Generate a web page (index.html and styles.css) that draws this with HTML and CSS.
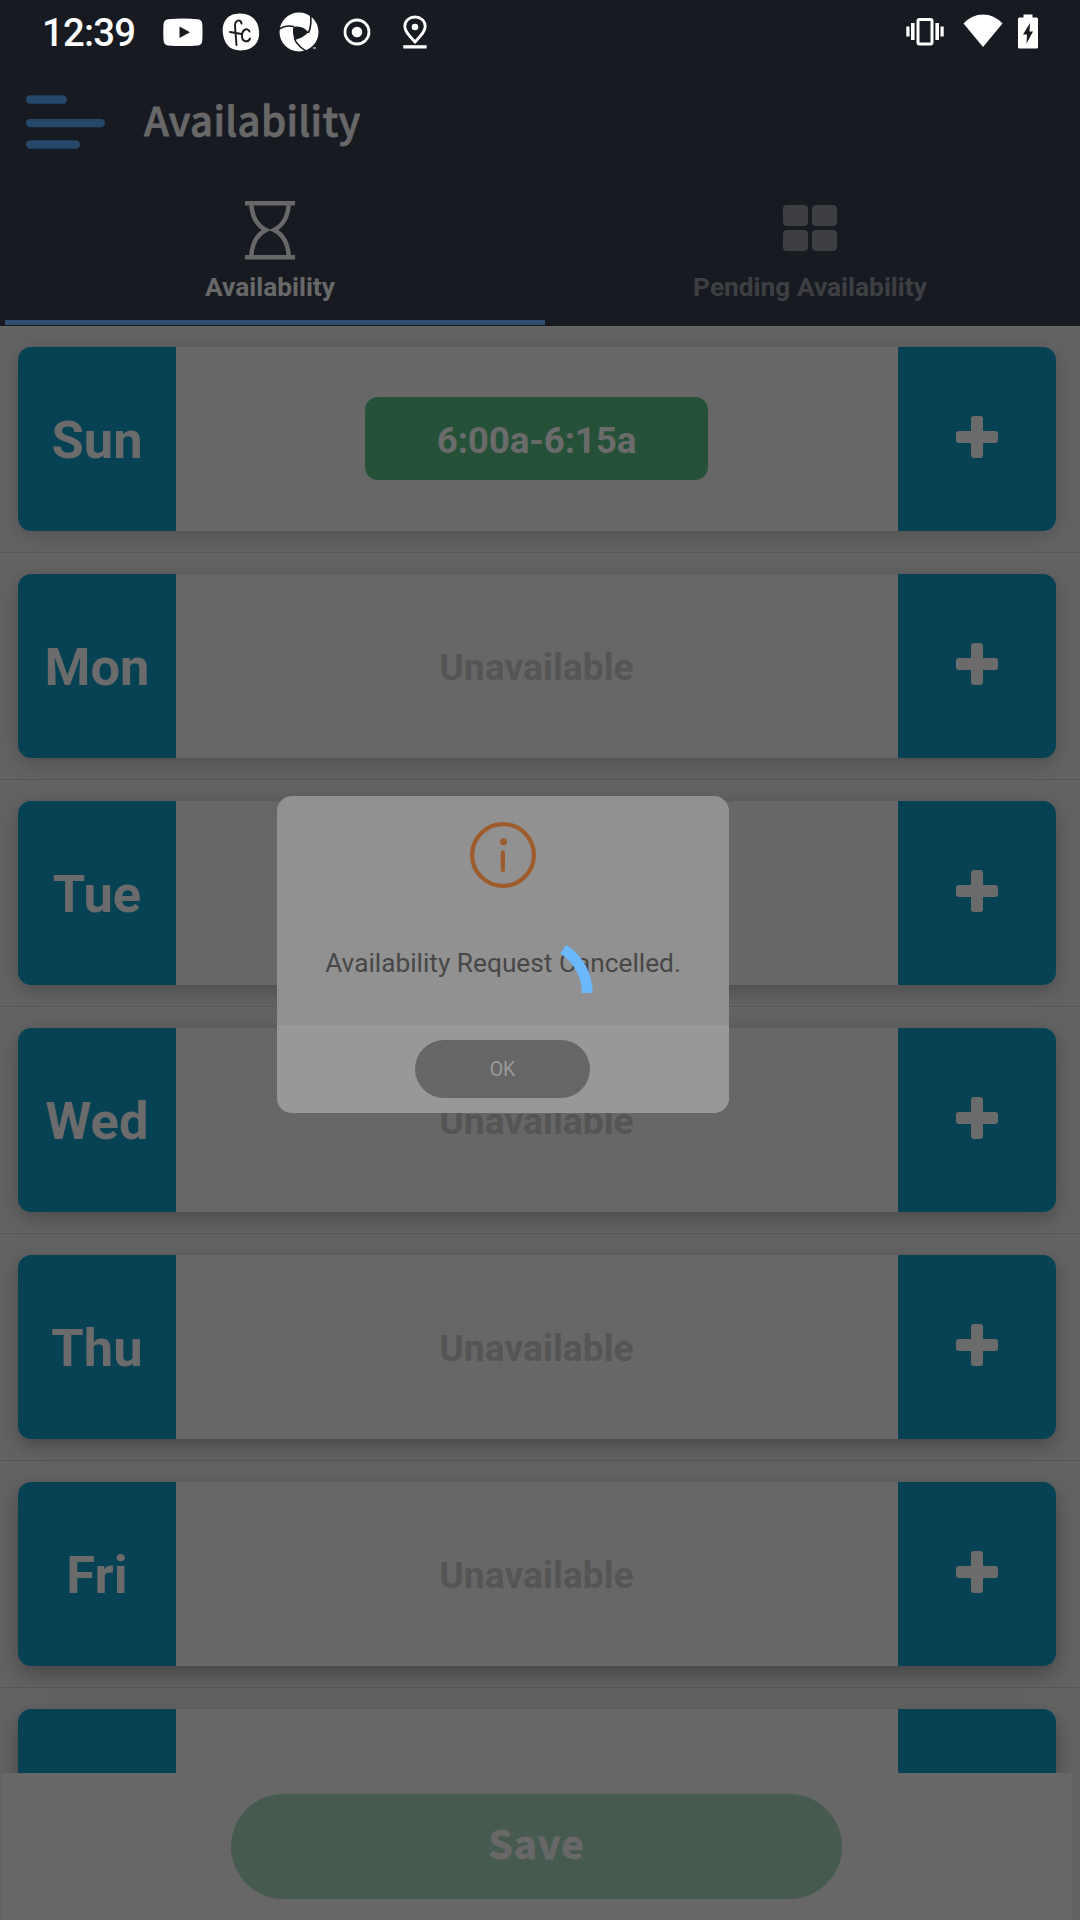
FILE: index.html
```html
<!DOCTYPE html>
<html lang="en">
<head>
<meta charset="utf-8">
<title>Availability</title>
<link rel="stylesheet" href="styles.css">
</head>
<body>
<div class="screen">
  <header class="header">
    <div class="status">
      <span class="clock">12:39</span>
      <div class="status-left">
        <svg class="sicon" viewBox="0 0 48 48"><path fill="#fff" fill-rule="evenodd" d="M9 11.200Q24 9.600 39 11.200Q43 11.800 43.300 16Q43.800 24 43.300 32.500Q43 37 39 37.400Q24 38.600 9 37.400Q5 37 4.500 32.500Q4 24 4.500 16Q5 11.800 9 11.200ZM20.500 18.500V30L31 24.200Z"/></svg>
        <svg class="sicon" viewBox="0 0 48 48"><path fill="#fff" d="M21 5.700C30 5 37 9 40 15C42.500 21 43 28 40.500 33C37.500 39.500 31 42.500 24 42.500C16 42.500 10 39 7.500 32C5 25 5 18 8 13C11 8 15 6 21 5.700Z"/><g fill="none" stroke="#181a22" stroke-width="1.900" stroke-linecap="round"><path d="M24.500 15.500C24 11 18 11.500 18 18L19.500 37M13 24L24.500 26"/><path d="M32.500 23.500C31 19.500 25.500 21 25 27C24.500 34 31 35 33 30.500"/></g></svg>
        <svg class="sicon" viewBox="0 0 48 48"><circle cx="24" cy="24" r="19.500" fill="#fff"/><path fill="#181a22" d="M18.300 19C25 17.500 30 20 33.500 24.300C29 29 24 31 19.600 32C18 27 17.500 23 18.300 19Z"/><g fill="none" stroke="#181a22" stroke-width="1.600"><path d="M3 22Q10 16.500 19 18.500M33.500 25Q37 17 35.500 6M19.500 31Q23 39 33 44"/></g><path stroke="#fff" d="M38 40h3"/></svg>
        <svg class="sicon" viewBox="0 0 48 48"><circle cx="24" cy="24" r="12" fill="none" stroke="#fff" stroke-width="2.800"/><circle cx="24" cy="24" r="5.300" fill="#fff"/></svg>
        <svg class="sicon" viewBox="0 0 48 48"><path fill="none" stroke="#fff" stroke-width="2.800" d="M24 34C18 27.500 13.800 23.500 13.800 18.500C13.800 12.700 18.500 9 24 9S34.200 12.700 34.200 18.500C34.200 23.500 30 27.500 24 34Z"/><circle cx="24" cy="19" r="3.300" fill="#fff"/><path fill="#fff" d="M12.300 37.200h23.400v3.300H12.300z"/></svg>
      </div>
      <div class="status-right">
        <svg class="vibrate" viewBox="0 0 40 48"><rect x="13" y="11.500" width="14" height="24.500" rx="1.500" fill="none" stroke="#fff" stroke-width="3"/><path fill="#fff" d="M1.300 18.500h3.200v10H1.300zM6 15h3.600v17H6zM30.400 15h3.600v17h-3.600zM35.500 18.500h3.200v10h-3.200z"/></svg>
        <svg class="wifi" viewBox="0 0 40 48"><path fill="#fff" d="M.5 15.500Q9 6.500 20 6.500T39.500 15.500L20 39Z"/></svg>
        <svg class="battery" viewBox="0 0 20 48"><path fill="#fff" d="M5.500 6.500h9v3H18.500q1.500 0 1.500 1.500V39q0 1.500-1.500 1.500H1.500Q0 40.500 0 39V11q0-1.500 1.500-1.500h4z"/><path fill="#181a22" d="M12 15L5 26.500h4L8.500 35.500L15 23.500h-3.500Z"/></svg>
      </div>
    </div>
    <div class="titlebar">
      <svg class="menu" viewBox="0 0 80 54"><g fill="#254769"><rect y="0.300" width="41" height="8.400" rx="4.200"/><rect y="24" width="79" height="8.200" rx="4.100"/><rect y="45.300" width="54" height="8.400" rx="4.200"/></g></svg>
      <h1 class="title">Availability</h1>
    </div>
    <nav class="tabs">
      <div class="tab tab-active">
        <svg class="tab-icon" viewBox="0 0 60 60"><g fill="none" stroke="#686868" stroke-width="4.500"><path d="M5 3.300H55M5 57.200H55"/><path d="M11.300 4C12 17 18 26 26 30C18 34 12 43 11.300 56M48.700 4C48 17 42 26 34 30C42 34 48 43 48.700 56"/></g></svg>
        <span class="tab-label">Availability</span>
      </div>
      <div class="tab">
        <svg class="tab-icon" viewBox="0 0 60 60"><g fill="#3e3f43"><rect x="3" y="5" width="25" height="21" rx="4"/><rect x="32" y="5" width="25" height="21" rx="4"/><rect x="3" y="30" width="25" height="21" rx="4"/><rect x="32" y="30" width="25" height="21" rx="4"/></g></svg>
        <span class="tab-label">Pending Availability</span>
      </div>
    </nav>
    <div class="indicator"></div>
  </header>

  <main class="days">
    <section class="row"><div class="card e1"><div class="day">Sun</div><div class="slot"><span class="chip">6:00a-6:15a</span></div><div class="add"><i class="plus"></i></div></div></section>
    <section class="row"><div class="card e2"><div class="day">Mon</div><div class="slot">Unavailable</div><div class="add"><i class="plus"></i></div></div></section>
    <section class="row"><div class="card e3"><div class="day">Tue</div><div class="slot">Unavailable</div><div class="add"><i class="plus"></i></div></div></section>
    <section class="row"><div class="card e4"><div class="day">Wed</div><div class="slot">Unavailable</div><div class="add"><i class="plus"></i></div></div></section>
    <section class="row"><div class="card e5"><div class="day">Thu</div><div class="slot">Unavailable</div><div class="add"><i class="plus"></i></div></div></section>
    <section class="row"><div class="card e6"><div class="day">Fri</div><div class="slot">Unavailable</div><div class="add"><i class="plus"></i></div></div></section>
    <section class="row"><div class="card e7"><div class="day"></div><div class="slot"></div><div class="add"></div></div></section>
  </main>

  <footer class="savebar"><button class="save">Save</button></footer>

  <div class="dialog">
    <div class="dialog-body">
      <svg class="info" viewBox="0 0 66 66"><circle cx="33" cy="33" r="30.900" fill="none" stroke="#9e5c2d" stroke-width="4.200"/><circle cx="33.500" cy="19.700" r="3.500" fill="#9e5c2d"/><rect x="30.700" y="28.500" width="4.300" height="21.500" rx="2.100" fill="#9e5c2d"/></svg>
      <p class="message">Availability Request Cancelled.</p>
    </div>
    <div class="dialog-foot"><button class="ok">OK</button></div>
  </div>
  <svg class="spinner" viewBox="0 0 120 120"><path fill="none" stroke="#6bb8fd" stroke-width="10.800" d="M87.300 16.300A51.800 51.800 0 0 1 111.300 60"/></svg>
</div>
</body>
</html>
```
FILE: styles.css
```css
* { box-sizing: border-box; }
body { margin: 0; font-family: Roboto, sans-serif; }
.screen {
  position: relative;
  display: flex;
  flex-direction: column;
  width: 1080px;
  height: 1920px;
  overflow: hidden;
  background: #636363;
}

/* Header */
.header {
  display: flex;
  flex-direction: column;
  flex: none;
  height: 326px;
  background: #181a22;
}
.status {
  display: flex;
  align-items: center;
  height: 63px;
  padding: 0 42px;
}
.clock {
  width: 117px;
  padding-top: 3px;
  color: #fff;
  font-size: 38.300px;
  font-weight: 500;
  letter-spacing: -0.8px;
  line-height: 48px;
}
.status-left { display: flex; gap: 10px; }
.sicon { width: 48px; height: 48px; }
.status-right { display: flex; margin-left: auto; }
.vibrate, .wifi { width: 40px; height: 48px; }
.wifi { margin: 0 15px 0 18px; }
.battery { width: 20px; height: 48px; }
.titlebar {
  display: flex;
  align-items: flex-start;
  height: 135px;
  padding: 32px 0 0 26px;
}
.menu { width: 80px; height: 54px; }
.title {
  margin: 0 0 0 38px;
  color: #686868;
  font-family: "Noto Sans CJK JP", sans-serif;
  font-size: 40px;
  font-weight: 500;
  letter-spacing: 0.35px;
  line-height: 48px;
  -webkit-text-stroke: 0.8px #686868;
}
.tabs { display: flex; height: 122px; }
.tab {
  display: flex;
  flex-direction: column;
  align-items: center;
  flex: 1;
  padding-top: 2px;
  color: #3e3f43;
}
.tab-active { color: #686868; }
.tab-icon { width: 60px; height: 60px; }
.tab-label {
  margin-top: 11px;
  font-size: 26.300px;
  font-weight: 700;
  line-height: 32px;
}
.indicator {
  width: 540px;
  height: 5px;
  margin-left: 5px;
  background: #2c4d6b;
}

/* Day list */
.days { flex: 1; overflow: hidden; }
.row {
  height: 227px;
  padding: 21px 24px 0 18px;
  border-bottom: 1px solid #585858;
}
.card {
  display: flex;
  height: 184px;
  border-radius: 13px;
  background: #676767;
}
.e1 { box-shadow: 0 4px 20px rgba(0, 0, 0, .19); }
.e2 { box-shadow: 0 5px 20px rgba(0, 0, 0, .22); }
.e3 { box-shadow: 0 5px 20px rgba(0, 0, 0, .24); }
.e4 { box-shadow: 0 6px 20px rgba(0, 0, 0, .26); }
.e5 { box-shadow: 0 7px 20px rgba(0, 0, 0, .28); }
.e6 { box-shadow: 0 8px 21px rgba(0, 0, 0, .30); }
.e7 { box-shadow: 0 9px 21px rgba(0, 0, 0, .32); }
.day, .add {
  display: flex;
  align-items: center;
  justify-content: center;
  width: 158px;
  background: #064154;
}
.day {
  padding: 2px 0 0;
  border-radius: 13px 0 0 13px;
  color: #6b6b6b;
  font-size: 52.500px;
  font-weight: 700;
}
.add {
  padding-bottom: 4px;
  border-radius: 0 13px 13px 0;
}
.plus {
  display: grid;
  place-items: center;
  width: 42px;
  height: 42px;
}
.plus::before, .plus::after {
  grid-area: 1 / 1;
  border-radius: 3px;
  background: #6b6b6b;
  content: "";
}
.plus::before { width: 12px; height: 42px; }
.plus::after { width: 42px; height: 12px; }
.slot {
  display: flex;
  align-items: center;
  justify-content: center;
  flex: 1;
  padding: 1px 1px 0 0;
  color: #555;
  font-size: 37.300px;
  font-weight: 700;
}
.chip {
  display: flex;
  align-items: center;
  justify-content: center;
  width: 343px;
  height: 83px;
  margin-top: -3px;
  padding-top: 4px;
  border-radius: 13px;
  background: #265139;
  color: #6b6b6b;
  font-size: 36.800px;
  letter-spacing: -0.15px;
}

/* Save bar */
.savebar {
  display: flex;
  justify-content: center;
  flex: none;
  width: 1070px;
  height: 146px;
  margin: 0 0 1px 2px;
  padding: 21px 1px 0 0;
  background: #676767;
}
.save {
  width: 611px;
  height: 105px;
  padding: 0 0 10px;
  border: 0;
  border-radius: 53px;
  background: #465a50;
  color: #686868;
  font-family: "Noto Sans CJK JP", sans-serif;
  font-size: 39.500px;
  font-weight: 700;
  letter-spacing: 0.8px;
  -webkit-text-stroke: 0.8px #686868;
}

/* Dialog over the list */
.dialog {
  position: absolute;
  left: 277px;
  top: 796px;
  width: 452px;
  height: 317px;
  overflow: hidden;
  border-radius: 15px;
  background: #919191;
}
.dialog-body {
  display: flex;
  flex-direction: column;
  align-items: center;
  height: 229px;
  padding-top: 26px;
}
.info { width: 66px; height: 66px; }
.message {
  margin: 58px 0 0;
  color: #474747;
  font-size: 26.250px;
  line-height: 34px;
}
.dialog-foot {
  display: flex;
  justify-content: center;
  height: 88px;
  padding: 15px 1px 0 0;
  background: #989898;
}
.ok {
  width: 175px;
  height: 58px;
  padding: 0;
  border: 0;
  border-radius: 29px;
  background: #666;
  color: #999;
  font-family: Roboto, sans-serif;
  font-size: 19.500px;
}
.spinner {
  position: absolute;
  left: 476px;
  top: 933px;
  width: 120px;
  height: 120px;
}
```
